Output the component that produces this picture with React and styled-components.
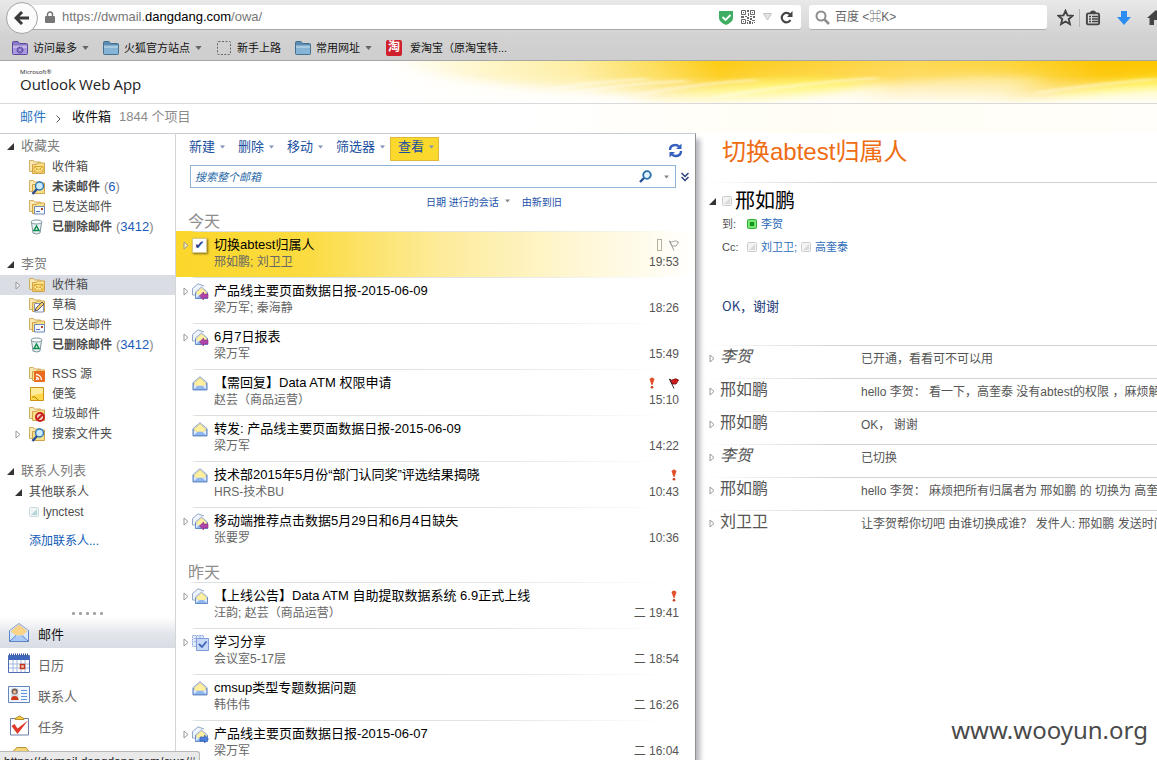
import { useState } from "react";
import styled, { createGlobalStyle } from "styled-components";

const GlobalStyle = createGlobalStyle`
  * {
    box-sizing: border-box;
  }
  body {
    margin: 0;
    background: #fff;
    font-family: "Liberation Sans", "Noto Sans CJK SC", sans-serif;
    font-size: 12px;
    line-height: 18px;
    color: #4c4c4c;
  }
  button, input {
    font-family: inherit;
    margin: 0;
    padding: 0;
    border: 0;
    background: none;
  }
  button {
    cursor: pointer;
  }
  a {
    text-decoration: none;
    color: inherit;
  }
  ul {
    list-style: none;
    margin: 0;
    padding: 0;
  }
  svg {
    display: block;
    flex: none;
  }
`;

const Page = styled.div`
  position: relative;
  display: flex;
  flex-direction: column;
  height: 100vh;
  overflow: hidden;
`;

/* ---------- browser ---------- */
const Chrome = styled.header`
  flex: none;
  background: linear-gradient(#e9e9e9, #d2d2d2 60%, #cecece);
  border-bottom: 1px solid #a6a6a6;
`;
const NavBar = styled.div`
  display: flex;
  align-items: center;
  height: 35px;
  padding-left: 6px;
  overflow: hidden;
`;
const BackBtn = styled.button`
  display: flex;
  align-items: center;
  justify-content: center;
  flex: none;
  width: 32px;
  height: 32px;
  border: 1px solid #a4a4a4;
  border-radius: 50%;
  background: #fbfbfb;
  z-index: 1;
`;
const UrlBox = styled.div`
  display: flex;
  align-items: center;
  flex: 1;
  height: 25px;
  margin-left: -8px;
  padding: 0 8px 0 15px;
  background: #fff;
  border-bottom: 1px solid #a9a9a9;
  border-radius: 0 3px 3px 0;
`;
const Url = styled.span`
  flex: 1;
  padding-left: 7px;
  font-size: 13px;
  color: #777;

  b {
    font-weight: normal;
    color: #000;
  }
`;
const UrlIcons = styled.div`
  display: flex;
  align-items: center;
  gap: 8px;
`;
const ChromeSearch = styled.label`
  display: flex;
  align-items: center;
  gap: 5px;
  flex: none;
  width: 238px;
  height: 25px;
  margin-left: 8px;
  padding-left: 6px;
  background: #fff;
  border-bottom: 1px solid #a9a9a9;
  border-radius: 3px;

  input {
    flex: 1;
    min-width: 0;
    font-size: 12px;
    outline: none;
  }
  input::placeholder {
    color: #666;
    opacity: 1;
  }
`;
const ChromeTools = styled.div`
  display: flex;
  align-items: center;
  gap: 16px;
  flex: none;
  width: 110px;
  padding-left: 10px;
  overflow: hidden;
`;
const ToolPair = styled.div`
  display: flex;
  align-items: center;
  gap: 5px;
`;
const ToolDivider = styled.span`
  width: 1px;
  height: 18px;
  background: #b5b5b5;
`;
const Bookmarks = styled.nav`
  display: flex;
  align-items: center;
  gap: 14px;
  height: 25px;
  padding-left: 12px;
`;
const Bookmark = styled.a`
  display: flex;
  align-items: center;
  gap: 5px;
  font-size: 11px;
  color: #111;
  white-space: nowrap;
`;
const TaoBadge = styled.span`
  width: 16px;
  height: 16px;
  margin-right: 3px;
  border-radius: 2px;
  background: #d0202c;
  color: #fff;
  font-size: 12px;
  font-weight: bold;
  line-height: 15px;
  text-align: center;
`;

/* ---------- banner ---------- */
const Banner = styled.div`
  display: flex;
  justify-content: space-between;
  flex: none;
  height: 43px;
  border-bottom: 1px solid #d9d9d9;
`;
const Logo = styled.div`
  padding: 8px 0 0 20px;
  color: #222;
  font-family: "Open Sans", "Noto Sans", sans-serif;
`;
const LogoSmall = styled.div`
  font-size: 6px;
  line-height: 7px;
`;
const LogoBig = styled.div`
  display: flex;
  gap: 3px;
  font-size: 15px;
  line-height: 17px;
`;
const Crumbs = styled.nav`
  display: flex;
  align-items: center;
  flex: none;
  height: 29px;
  padding: 0 0 4px 20px;
  font-size: 13px;
  color: #8b8b8b;
  background: linear-gradient(90deg, #fff 45%, #fffdf3 70%, #fffefa);

  a {
    color: #2a76c4;
  }
  svg {
    margin: 4px 11px 0 10px;
  }
  strong {
    margin-right: 8px;
    font-weight: normal;
    color: #111;
  }
`;

/* ---------- layout ---------- */
const Main = styled.main`
  display: flex;
  flex: 1;
  min-height: 0;
`;
const Sidebar = styled.aside`
  display: flex;
  flex-direction: column;
  flex: none;
  width: 175px;
  border-top: 1px solid #c9ced6;
`;
const Tree = styled.div`
  flex: 1;
  min-height: 0;
  padding-top: 1px;
  overflow: hidden;
`;
const TreeSection = styled.section`
  margin-bottom: 16px;
`;
const TreeHead = styled.h2`
  display: flex;
  align-items: center;
  gap: 7px;
  height: 22px;
  margin: 0;
  padding-left: 7px;
  font-size: 13px;
  font-weight: normal;
  color: #7c7c7c;
`;
const TreeRow = styled.a`
  display: flex;
  align-items: center;
  gap: 7px;
  height: 20px;
  margin-top: ${(p) => (p.$spaced ? "9px" : "0")};
  padding-left: 15px;
  font-size: 12px;
  font-weight: ${(p) => (p.$bold ? "bold" : "normal")};
  background: ${(p) => (p.$active ? "#dadde4" : "none")};
`;
const Slot = styled.span`
  width: 7px;
`;
const Count = styled.span`
  margin-left: -3px;
  font-size: 13px;
  font-weight: normal;
  color: #8a8a8a;

  b {
    font-weight: normal;
    color: #1e5bb8;
  }
`;
const ContactRow = styled.a`
  display: flex;
  align-items: center;
  gap: ${(p) => (p.$leaf ? "4px" : "7px")};
  height: 20px;
  padding-left: ${(p) => (p.$leaf ? "29px" : "15px")};
`;
const AddContact = styled.a`
  display: block;
  margin-top: 10px;
  padding-left: 29px;
  color: #0f5bb5;
`;
const Modules = styled.nav`
  flex: none;
  height: 152px;
  overflow: hidden;
`;
const Dots = styled.div`
  display: flex;
  justify-content: center;
  gap: 4px;
  height: 9px;
  padding-top: 4px;

  i {
    width: 3px;
    height: 3px;
    border-radius: 1px;
    background: #a4a4a4;
  }
`;
const ModuleLink = styled.a`
  display: flex;
  align-items: center;
  gap: 8px;
  height: 31px;
  padding-left: 8px;
  font-size: 13px;
  color: ${(p) => (p.$active ? "#111" : "#666")};
  background: ${(p) =>
    p.$active ? "linear-gradient(#fff, #e4e7ec 50%, #d8dce4)" : "none"};

  span {
    padding-top: 4px;
  }
`;

/* ---------- message list ---------- */
const ListPane = styled.section`
  flex: none;
  width: 521px;
  border: 1px solid #c9ced6;
  border-right-color: #8f8f8f;
  border-left-color: #d5d5d5;
  border-bottom: 0;
  background: #fff;
  box-shadow: 5px 5px 5px -1px #b5b5bd;
  z-index: 1;
`;
const Toolbar = styled.div`
  display: flex;
  align-items: center;
  height: 31px;
  padding: 1px 12px 2px 5px;
`;
const ToolBtn = styled.button`
  display: flex;
  align-items: center;
  gap: 5px;
  height: 24px;
  padding: 0 4px 4px 7px;
  border: 1px solid ${(p) => (p.$active ? "#e0b93c" : "transparent")};
  background: ${(p) => (p.$active ? "#fbd82c" : "none")};
  font-size: 13px;
  line-height: 16px;
  color: #1a4fa0;
`;
const RefreshBtn = styled.button`
  margin: 2px 0 0 auto;
`;
const SearchRow = styled.div`
  display: flex;
  align-items: center;
  gap: 5px;
  padding: 0 6px 0 14px;
`;
const SearchBox = styled.label`
  display: flex;
  align-items: center;
  gap: 12px;
  flex: 1;
  height: 23px;
  padding: 0 6px 0 4px;
  border: 1px solid #8fb4d8;

  input {
    flex: 1;
    min-width: 0;
    font-size: 11px;
    outline: none;
  }
  input::placeholder {
    color: #2b6aa8;
    font-style: italic;
    opacity: 1;
  }
`;
const SortRow = styled.div`
  display: flex;
  align-items: center;
  gap: 12px;
  height: 24px;
  padding: 2px 0 0 250px;

  button {
    display: flex;
    align-items: center;
    gap: 6px;
    font-size: 10px;
    color: #1b52a8;
  }
`;
const GroupHead = styled.h2`
  height: 19px;
  margin: ${(p) => (p.$first ? "0" : "10px 0 0")};
  padding-left: 12px;
  font-size: 16px;
  font-weight: normal;
  line-height: 20px;
  color: #8e8e8e;
`;
const MailRow = styled.li`
  display: flex;
  height: 46px;
  padding: 5px 16px 0 7px;
  border-top: 1px solid transparent;
  border-image: linear-gradient(
      90deg,
      transparent 3%,
      #dadfdf 4%,
      #e2e5e5 60%,
      transparent 95%
    )
    1;
  background: ${(p) =>
    p.$selected
      ? "linear-gradient(90deg, #fbd72b, #fbdb40 25%, #fdeb98 50%, #fff6cf 75%, #fff)"
      : "none"};
`;
const RowLeft = styled.div`
  display: flex;
  align-items: center;
  gap: 2px;
  width: 31px;
  height: 16px;
`;
const RowCheck = styled.input`
  appearance: none;
  display: grid;
  place-content: center;
  width: 15px;
  height: 15px;
  background: #fff;
  border: 1px solid #d8c88a;
  box-shadow: 1px 1px 2px #7d6c1c;

  &:checked::before {
    content: "✔";
    font: 12px/13px "DejaVu Sans", sans-serif;
    color: #2a3f95;
  }
`;
const RowText = styled.div`
  flex: 1;
  min-width: 0;
  overflow: hidden;
  white-space: nowrap;
`;
const Subject = styled.div`
  font-size: 13px;
  line-height: 16px;
  color: #000;
`;
const Sender = styled.div`
  font-size: 12px;
  line-height: 18px;
  color: #666;
`;
const RowRight = styled.div`
  display: flex;
  flex-direction: column;
  align-items: flex-end;
  font-size: 12px;
  color: #555;
`;
const Marks = styled.div`
  display: flex;
  align-items: center;
  gap: ${(p) => (p.$tight ? "4px" : "12px")};
  height: 16px;
`;

/* ---------- reading pane ---------- */
const Reading = styled.article`
  flex: 1;
  min-width: 0;
  overflow: hidden;
  padding-left: 11px;
`;
const Title = styled.h1`
  height: 49px;
  margin: 0;
  padding: 4px 0 0 15px;
  font-size: 24px;
  font-weight: normal;
  line-height: 30px;
  color: #ee6c12;
`;
const Rule = styled.div`
  height: 1px;
  background: linear-gradient(90deg, transparent, #d0d0d0 30%);
`;
const From = styled.div`
  display: flex;
  align-items: center;
  height: 29px;
  padding: 7px 0 0 2px;
  font-size: 20px;
  line-height: 24px;
  color: #000;

  svg + svg {
    margin: 0 3px 0 6px;
  }
`;
const Recipients = styled.div`
  display: flex;
  align-items: center;
  gap: 4px;
  height: 23px;
  padding-left: 15px;
  font-size: 11px;

  span {
    width: 21px;
  }
  a {
    color: #2d6cb8;
  }
`;
const Body = styled.p`
  height: 87px;
  margin: 0;
  padding: 39px 0 0 15px;
  font-family: "Noto Sans CJK SC", sans-serif;
  font-size: 13px;
  color: #24407e;
`;
const ReplyRow = styled.li`
  display: grid;
  grid-template-columns: 13px 141px 1fr;
  align-items: start;
  height: 33px;
  border-top: 1px solid transparent;
  border-image: linear-gradient(90deg, transparent, #d2d2d2 30%) 1;
  white-space: nowrap;
  overflow: hidden;

  svg {
    margin: 8px 0 0 2px;
  }
`;
const ReplyName = styled.span`
  font-size: 16px;
  line-height: 22px;
  font-style: ${(p) => (p.$me ? "italic" : "normal")};
  color: #555;
`;
const ReplyText = styled.span`
  padding-top: 4px;
  font-size: 12px;
  color: #555;
`;

const StatusBar = styled.div`
  position: absolute;
  left: 0;
  bottom: 0;
  z-index: 2;
  height: 9px;
  padding: 0 4px;
  overflow: hidden;
  border: 1px solid #b8b8b8;
  border-width: 1px 1px 0 0;
  border-radius: 0 3px 0 0;
  background: #e9e9e9;
  color: #222;
  font-size: 12px;
  line-height: 20px;
`;
const Watermark = styled.div`
  position: absolute;
  right: 9px;
  bottom: 15px;
  z-index: 2;
  font-family: "Noto Sans", sans-serif;
  font-size: 24px;
  line-height: 30px;
  color: #4a4a4a;
`;

/* ---------- small glyphs ---------- */
const Down = ({ color = "#7d94b8", w = 5 }) => (
  <svg width={w} height="4" viewBox="0 0 8 5">
    <path d="M0 0h8L4 5z" fill={color} />
  </svg>
);
const Open = () => (
  <svg width="7" height="7" viewBox="0 0 7 7">
    <path d="M7 0v7H0z" fill="#333" />
  </svg>
);
const Closed = () => (
  <svg width="6" height="9" viewBox="0 0 6 9">
    <path d="M1 1l4 3.5L1 8z" fill="#fff" fillOpacity=".6" stroke="#999" />
  </svg>
);
const Presence = ({ kind }) => (
  <svg width="10" height="10" viewBox="0 0 10 10">
    <rect
      x=".5"
      y=".5"
      width="9"
      height="9"
      rx="1"
      fill={kind === "on" ? "#7ee07a" : "#f4f4f4"}
      stroke={kind === "on" ? "#2fb52f" : kind === "lync" ? "#c5dce0" : "#cdcdcd"}
    />
    <path
      d={kind === "on" ? "M3 3h4v4H3z" : "M2 8L8 2v6z"}
      fill={kind === "on" ? "#0a9a14" : kind === "lync" ? "#b4d6da" : "#dadada"}
    />
  </svg>
);

const BlueFolder = ({ purple }) => (
  <svg width="16" height="16" viewBox="0 0 16 16">
    <path
      d="M.5 13.500V2.500q0-1 1-1H6l1.500 2H14.500q1 0 1 1v9q0 1-1 1H1.500q-1 0-1-1z"
      fill={purple ? "#8a78c8" : "#5a8cb4"}
      stroke={purple ? "#5d4a9c" : "#47708f"}
    />
    <path d="M1 5.500h14v8.500H1z" fill={purple ? "#a99adf" : "#86b4d6"} />
    <path d="M1 5.500h14v2.500H1z" fill="#fff" opacity=".3" />
    {purple && (
      <circle cx="8" cy="10" r="2.500" fill="none" stroke="#5b469f" strokeWidth="2" strokeDasharray="1.500 .5" />
    )}
  </svg>
);

const FolderIcon = ({ kind }) => {
  if (kind === "trash")
    return (
      <svg width="16" height="16" viewBox="0 0 16 16">
        <path d="M2.500 3.500L4 14q4 2 7 0l1.500-10.500z" fill="#e6f2f3" stroke="#7d959c" />
        <ellipse cx="7.500" cy="3" rx="5.500" ry="2" fill="#f8fcfc" stroke="#7d959c" />
        <path d="M7.500 7l2.500 4.500H5z" fill="none" stroke="#118a4e" strokeWidth="1.500" />
      </svg>
    );
  if (kind === "note")
    return (
      <svg width="16" height="16" viewBox="0 0 16 16">
        <path d="M1.500 1.500h13v13h-13z" fill="#ffd84a" stroke="#c99412" />
        <path d="M2 2h12v5L2 10z" fill="#ffec9a" />
        <path d="M3 11h3l3 3" fill="none" stroke="#b8860b" />
      </svg>
    );
  return (
    <svg width="16" height="16" viewBox="0 0 16 16">
      <path d="M.5 12.500V1.500h4l1 1.500h6v9.500z" fill="#f9e8b0" stroke="#cfae62" />
      <path d="M3.500 14.500v-9h4l1-1.500h7v10.500z" fill="#fbe08a" stroke="#cfa34c" />
      {kind === "inbox" && (
        <path d="M5 7.500h9v5.500H5zM5 7.500l4.500 3.500L14 7.500M5 13l3-3M14 13l-3-3" fill="#fff0a8" stroke="#dba52c" />
      )}
      {kind === "sent" && (
        <>
          <path d="M5.500 7.500h10v7.500h-10z" fill="#f3f7fe" stroke="#6d88bd" />
          <path d="M12 9h2v2h-2z" fill="#b5482a" />
          <path d="M7 12.500h4" stroke="#5673b5" />
        </>
      )}
      {kind === "draft" && (
        <>
          <path d="M5.500 6.500h9v8.500h-9z" fill="#f6f9ff" stroke="#8894b0" />
          <path d="M6 14l1-3 6-6 2 2-6 6z" fill="#f4c95a" stroke="#5a5a78" />
        </>
      )}
      {kind === "search" && (
        <>
          <circle cx="10.500" cy="7" r="4" fill="#cfeafa" stroke="#2a78b8" strokeWidth="1.500" />
          <path d="M8 10l-4.500 5" stroke="#2c4f9a" strokeWidth="2.500" />
        </>
      )}
      {kind === "rss" && (
        <>
          <rect x="5" y="5" width="11" height="11" rx="1" fill="#ea6a1f" />
          <path d="M7 8.500a5.500 5.500 0 0 1 5.500 5.500M7 11.500a2.500 2.500 0 0 1 2.500 2.500" fill="none" stroke="#fff" strokeWidth="1.300" />
          <circle cx="7.500" cy="13.500" r=".8" fill="#fff" />
        </>
      )}
      {kind === "junk" && (
        <>
          <circle cx="11" cy="11" r="4" fill="#f8d4ce" stroke="#c8201c" strokeWidth="2" />
          <path d="M8.500 13.500l5-5" stroke="#c8201c" strokeWidth="2" />
        </>
      )}
    </svg>
  );
};

const Envelope = () => (
  <>
    <path d="M1 6.500L7 1.500 13 6.500V13H1z" fill="#d5e6fb" stroke="#8ba3c8" strokeWidth=".8" />
    <path d="M2 7L7 2.500 12 7v2L7 10.500 2 9z" fill="#fff0a0" stroke="#dcc274" strokeWidth=".6" />
    <path d="M1 8l4 2h4l4-2v5H1z" fill="#dcebfd" />
    <path d="M1 13l4-3.500h4l4 3.500z" fill="#8fb6ee" />
    <path d="M1 7v6h12V7" fill="none" stroke="#5d84c4" strokeWidth=".9" />
  </>
);

const MailIcon = ({ kind }) => {
  if (kind === "single")
    return (
      <svg width="16" height="16" viewBox="0 0 14 14">
        <Envelope />
      </svg>
    );
  if (kind === "meeting")
    return (
      <svg width="17" height="17" viewBox="0 0 17 17">
        <path d="M.5 1.500h11v11H.5z" fill="#dfe9fa" stroke="#8aa5d8" strokeDasharray="1.500 .8" />
        <path d="M2 4.500h9M2 7.500h9M4.500 2v10M8 2v10" stroke="#9db5e2" />
        <path d="M4.500 4.500h12v12h-12z" fill="#c5d8f7" stroke="#7f9cd8" />
        <path d="M7 10l3 3L14.500 7.500" fill="none" stroke="#3f64b8" strokeWidth="1.800" />
      </svg>
    );
  return (
    <svg width="17" height="17" viewBox="0 0 17 17">
      <path d="M.5 12V5.500L6 .8 12 3" fill="#eef4fd" stroke="#93a6c8" />
      <path d="M.5 12h4" stroke="#93a6c8" />
      <g transform="translate(2.500 2.500)">
        <Envelope />
      </g>
      {kind === "replied" && (
        <path d="M7.500 13l4-4V11H16v4h-4.500v2z" fill="#b044a8" stroke="#8a2c84" strokeWidth=".6" />
      )}
      {kind === "forwarded" && (
        <path d="M16.500 13l-4-4V11H8v4h4.500v2z" fill="#4c80dc" stroke="#2b56ac" strokeWidth=".6" />
      )}
    </svg>
  );
};

const Important = () => (
  <svg width="10" height="12" viewBox="0 0 10 12">
    <path d="M2.500 2q2.500-3 5 0L5.500 8h-1z" fill="#e2502c" />
    <circle cx="5" cy="10.300" r="1.300" fill="#c83c1c" />
  </svg>
);
const Flag = ({ red }) => (
  <svg width="10" height="11" viewBox="0 0 10 11">
    <path
      d="M.5 1q2 2 4 .5T9.500 2L7 6H3z"
      fill={red ? "#d01c1c" : "none"}
      stroke={red ? "#7a1010" : "#999"}
      strokeWidth=".9"
    />
    <path d="M.5 1l4.500 9.500" stroke={red ? "#333" : "#999"} />
  </svg>
);
const Category = () => (
  <svg width="10" height="12" viewBox="0 0 10 12">
    <rect x="2.500" y=".5" width="4" height="11" fill="#fffdf0" stroke="#b5b2a2" />
  </svg>
);

const ModuleIcon = ({ kind }) => (
  <svg width="22" height="22" viewBox="0 0 22 22">
    {kind === "mail" && (
      <>
        <path d="M1.500 8.500L11 1.500l9.500 7v11h-19z" fill="#e8f1fc" stroke="#8a9fc4" />
        <path d="M3.500 9L11 3l7.500 6v3L11 15l-7.500-3z" fill="#fbd48a" stroke="#e3b562" strokeWidth=".6" />
        <path d="M2 9l6 4.500h6L20 9v10H2z" fill="#d8e8fc" />
        <path d="M2 19.500L8 13.500h6l6 6z" fill="#a9caf6" />
        <path d="M1.500 8.500v11h19v-11M2 19l6-5.500M20 19l-6-5.500" fill="none" stroke="#5d84c4" />
      </>
    )}
    {kind === "calendar" && (
      <>
        <path d="M.5 2.500h21v17H.5z" fill="#fff" stroke="#4e6eb2" />
        <path d="M1 3h20v4H1z" fill="#3f66bb" />
        <path d="M1 1.500h20" stroke="#2e4f9c" strokeWidth="2" strokeDasharray="1 1" />
        <path d="M1 11h20M1 15h20M5 7v12M9 7v12M13 7v12M17 7v12" stroke="#a4b8de" />
        <path d="M12.500 11.500h4v4h-4z" fill="#f6c9b8" stroke="#c03820" strokeWidth="1.500" />
      </>
    )}
    {kind === "contacts" && (
      <>
        <path d="M.5 2.500h21v16H.5z" fill="#f3f8ff" stroke="#6585bd" />
        <path d="M3 4.500h7.500v12H3z" fill="#d9dde4" />
        <circle cx="6.700" cy="7.500" r="3" fill="#6b5a52" />
        <circle cx="6.700" cy="8" r="1.800" fill="#e8b898" />
        <path d="M3 16q0-4 3.700-4t3.800 4z" fill="#cc3a1c" />
        <path d="M13 6.500h6M13 9.500h6M13 12.500h6M13 15.500h6" stroke="#5f92d8" />
      </>
    )}
    {kind === "tasks" && (
      <>
        <path d="M2.500 3.500h18v16.500h-18z" fill="#fff" stroke="#6d7fa8" />
        <path d="M7 4.500q0-2 2-2 2.500-3 5 0 2 0 2 2z" fill="#f5cf4a" stroke="#b8912a" />
        <path d="M3.500 11l3-2 3 4.500L20 5.500 9.500 19z" fill="#e2382a" />
      </>
    )}
    {kind === "public" && (
      <>
        <path d="M1 9L9 1.500h9l3 4V22H1z" fill="#f4d774" stroke="#b49436" />
        <path d="M4 7h14" stroke="#9d8330" strokeWidth="1.500" />
      </>
    )}
  </svg>
);

// yellow light sweep on the right of the banner
const Sweep = () => (
  <svg width="770" height="42" viewBox="0 0 770 42">
    <defs>
      <linearGradient id="sweepX">
        <stop offset="0" stopColor="#fff" />
        <stop offset=".1" stopColor="#fff8d2" />
        <stop offset=".25" stopColor="#feeea0" />
        <stop offset=".35" stopColor="#fddd58" />
        <stop offset=".43" stopColor="#fdcc14" />
        <stop offset=".5" stopColor="#fdd02c" />
        <stop offset=".68" stopColor="#fed956" />
        <stop offset=".8" stopColor="#fdd640" />
        <stop offset=".93" stopColor="#fdc600" />
        <stop offset="1" stopColor="#fdc800" />
      </linearGradient>
      <linearGradient id="sweepY" x2="0" y2="1">
        <stop offset="0" stopColor="#fff" stopOpacity="0" />
        <stop offset=".35" stopColor="#fff" stopOpacity=".08" />
        <stop offset=".7" stopColor="#fff" stopOpacity=".5" />
        <stop offset="1" stopColor="#fff" stopOpacity=".9" />
      </linearGradient>
      <filter id="wide" x="-20%" y="-80%" width="140%" height="260%">
        <feGaussianBlur stdDeviation="12 4" />
      </filter>
      <filter id="fine" x="-20%" y="-80%" width="140%" height="260%">
        <feGaussianBlur stdDeviation="5 1" />
      </filter>
    </defs>
    <rect width="770" height="42" fill="url(#sweepX)" />
    <g filter="url(#wide)">
      <path d="M-30 -10Q60 26 250 34L250 60H-30z" fill="#fff" opacity=".8" />
      <path d="M270 40Q330 20 420 18L500 22 420 42z" fill="#ffef30" />
      <path d="M650 40Q710 20 790 16v26z" fill="#ffef20" />
    </g>
    <rect width="770" height="42" fill="url(#sweepY)" />
    <g filter="url(#wide)">
      <path d="M380 46Q470 26 590 14L660 16 600 46z" fill="#fff" opacity=".35" />
      <path d="M340 50Q430 32 500 22L470 50z" fill="#fff" opacity=".6" />
      <path d="M620 50Q700 32 790 26v24z" fill="#fff" opacity=".6" />
    </g>
    <g filter="url(#fine)" fill="none" stroke="#fff" strokeWidth="2" opacity=".6">
      <path d="M165 28Q210 20 260 18" />
      <path d="M185 32Q240 22 300 20" />
      <path d="M250 34Q310 22 370 19" />
      <path d="M330 36Q410 22 490 17" />
      <path d="M650 32Q700 24 770 18" />
    </g>
  </svg>
);

const tree = [
  {
    title: "收藏夹",
    rows: [
      { icon: "inbox", name: "收件箱" },
      { icon: "search", name: "未读邮件", count: 6 },
      { icon: "sent", name: "已发送邮件" },
      { icon: "trash", name: "已删除邮件", count: 3412 },
    ],
  },
  {
    title: "李贺",
    rows: [
      { icon: "inbox", name: "收件箱", active: true, arrow: true },
      { icon: "draft", name: "草稿" },
      { icon: "sent", name: "已发送邮件" },
      { icon: "trash", name: "已删除邮件", count: 3412 },
      { icon: "rss", name: "RSS 源", spaced: true },
      { icon: "note", name: "便笺" },
      { icon: "junk", name: "垃圾邮件" },
      { icon: "search", name: "搜索文件夹", arrow: true },
    ],
  },
];

const modules = [
  { icon: "mail", name: "邮件" },
  { icon: "calendar", name: "日历" },
  { icon: "contacts", name: "联系人" },
  { icon: "tasks", name: "任务" },
  { icon: "public", name: "" },
];

const groups = [
  {
    title: "今天",
    mails: [
      { subject: "切换abtest归属人", from: "邢如鹏; 刘卫卫", time: "19:53", icon: "check", arrow: true },
      { subject: "产品线主要页面数据日报-2015-06-09", from: "梁万军; 秦海静", time: "18:26", icon: "replied", arrow: true },
      { subject: "6月7日报表", from: "梁万军", time: "15:49", icon: "replied", arrow: true },
      { subject: "【需回复】Data ATM 权限申请", from: "赵芸（商品运营）", time: "15:10", icon: "single", important: true, flag: true },
      { subject: "转发: 产品线主要页面数据日报-2015-06-09", from: "梁万军", time: "14:22", icon: "single" },
      { subject: "技术部2015年5月份“部门认同奖”评选结果揭晓", from: "HRS-技术BU", time: "10:43", icon: "single", important: true },
      { subject: "移动端推荐点击数据5月29日和6月4日缺失", from: "张要罗", time: "10:36", icon: "replied", arrow: true },
    ],
  },
  {
    title: "昨天",
    mails: [
      { subject: "【上线公告】Data ATM 自助提取数据系统 6.9正式上线", from: "汪韵; 赵芸（商品运营）", time: "二 19:41", icon: "multi", arrow: true, important: true },
      { subject: "学习分享", from: "会议室5-17层", time: "二 18:54", icon: "meeting", arrow: true },
      { subject: "cmsup类型专题数据问题", from: "韩伟伟", time: "二 16:26", icon: "single" },
      { subject: "产品线主要页面数据日报-2015-06-07", from: "梁万军", time: "二 16:04", icon: "forwarded", arrow: true },
    ],
  },
];

const replies = [
  { name: "李贺", me: true, text: "已开通，看看可不可以用" },
  { name: "邢如鹏", text: "hello 李贺： 看一下，高奎泰 没有abtest的权限 ，麻烦解决一下" },
  { name: "邢如鹏", text: "OK， 谢谢" },
  { name: "李贺", me: true, text: "已切换" },
  { name: "邢如鹏", text: "hello 李贺： 麻烦把所有归属者为 邢如鹏 的 切换为 高奎泰" },
  { name: "刘卫卫", text: "让李贺帮你切吧 由谁切换成谁？ 发件人: 邢如鹏 发送时间" },
];

const BrowserChrome = () => (
  <Chrome>
    <NavBar>
      <BackBtn aria-label="后退">
        <svg width="16" height="14" viewBox="0 0 16 14">
          <path d="M8 1L2 7l6 6M2.500 7H15" fill="none" stroke="#3a3a3a" strokeWidth="3" />
        </svg>
      </BackBtn>
      <UrlBox>
        <svg width="10" height="12" viewBox="0 0 10 12">
          <path d="M2.500 6V3.500a2.500 2.500 0 0 1 5 0V6" fill="none" stroke="#777" strokeWidth="1.500" />
          <rect y="5" width="10" height="7" rx="1" fill="#777" />
        </svg>
        <Url>
          https://dwmail.<b>dangdang.com</b>/owa/
        </Url>
        <UrlIcons>
          <svg width="14" height="15" viewBox="0 0 14 15">
            <path d="M0 1h14v7q0 4-7 7-7-3-7-7z" fill="#3fae62" />
            <path d="M3.500 7l3 3 5-5" fill="none" stroke="#fff" strokeWidth="1.800" />
          </svg>
          <svg width="14" height="14" viewBox="0 0 14 14">
            <g fill="none" stroke="#666">
              <path d="M.5.5h4v4h-4zM9.500.5h4v4h-4zM.5 9.500h4v4h-4z" />
            </g>
            <path
              d="M2 2h1v1H2zM11 2h1v1h-1zM2 11h1v1H2zM6 0h2v2H6zM7 3h1v3H7zM0 6h3v2H0zM4 6h2v1H4zM6 7h2v2H6zM9 6h2v1H9zM12 6h2v2h-2zM9 8h2v2H9zM6 10h2v1H6zM11 10h3v1h-3zM8 11h2v3H8zM11 12h1v2h-1zM13 12h1v1h-1zM6 12h1v2H6z"
              fill="#666"
            />
          </svg>
          <svg width="9" height="8" viewBox="0 0 9 8">
            <path d="M.5.5h8L4.500 7z" fill="#e4e4e4" stroke="#c4c4c4" />
          </svg>
          <svg width="13" height="13" viewBox="0 0 13 13">
            <path d="M10.500 9A4.700 4.700 0 1 1 10 3.500" fill="none" stroke="#444" strokeWidth="2.200" />
            <path d="M12.500 0v6H7z" fill="#444" />
          </svg>
        </UrlIcons>
      </UrlBox>
      <ChromeSearch>
        <svg width="15" height="15" viewBox="0 0 15 15">
          <circle cx="6" cy="6" r="4.500" fill="none" stroke="#8d8d8d" strokeWidth="2" />
          <path d="M9.500 9.500l4.500 4.500" stroke="#8d8d8d" strokeWidth="2.500" />
        </svg>
        <input aria-label="搜索" placeholder="百度 <⌘K>" />
      </ChromeSearch>
      <ChromeTools>
        <ToolPair>
          <svg width="17" height="17" viewBox="0 0 17 17">
            <path d="M8.500 1.800l2 4.600 5 .5-3.800 3.300 1.200 4.900-4.400-2.600-4.400 2.600 1.200-4.900L1.500 6.900l5-.5z" fill="none" stroke="#444" strokeWidth="1.900" />
          </svg>
          <ToolDivider />
          <svg width="16" height="16" viewBox="0 0 16 16">
            <path d="M5 3q0-2.500 3-2.500T11 3" fill="#444" />
            <rect x="1.900" y="3.400" width="12.200" height="11" rx="1.500" fill="none" stroke="#444" strokeWidth="1.900" />
            <path d="M4 6.500h2M7 6.500h6M4 9h2M7 9h6M4 11.500h2M7 11.500h6" stroke="#444" strokeWidth="1.300" />
          </svg>
        </ToolPair>
        <svg width="14" height="14" viewBox="0 0 14 14">
          <path d="M4 0h6v6h4l-7 8-7-8h4z" fill="#2d8cf0" />
        </svg>
        <svg width="18" height="15" viewBox="0 0 18 15">
          <path d="M9 0l9 8h-2.500v7H11v-5H7v5H2.500V8H0z" fill="#444" />
        </svg>
      </ChromeTools>
    </NavBar>
    <Bookmarks>
      <Bookmark href="#">
        <BlueFolder purple />
        访问最多
        <Down color="#666" w={7} />
      </Bookmark>
      <Bookmark href="#">
        <BlueFolder />
        火狐官方站点
        <Down color="#666" w={7} />
      </Bookmark>
      <Bookmark href="#">
        <svg width="16" height="16" viewBox="0 0 16 16">
          <rect x="1.500" y="1.500" width="13" height="13" rx="1" fill="none" stroke="#666" strokeDasharray="2 1.500" />
        </svg>
        新手上路
      </Bookmark>
      <Bookmark href="#">
        <BlueFolder />
        常用网址
        <Down color="#666" w={7} />
      </Bookmark>
      <Bookmark href="#">
        <TaoBadge>淘</TaoBadge>
        爱淘宝（原淘宝特...
      </Bookmark>
    </Bookmarks>
  </Chrome>
);

const Folders = () => (
  <Sidebar>
    <Tree>
      {tree.map((section) => (
        <TreeSection key={section.title}>
          <TreeHead>
            <Open />
            {section.title}
          </TreeHead>
          {section.rows.map((row) => (
            <TreeRow
              href="#"
              key={row.name}
              $bold={!!row.count}
              $active={row.active}
              $spaced={row.spaced}
            >
              <Slot>{row.arrow && <Closed />}</Slot>
              <FolderIcon kind={row.icon} />
              {row.name}
              {row.count && (
                <Count>
                  (<b>{row.count}</b>)
                </Count>
              )}
            </TreeRow>
          ))}
        </TreeSection>
      ))}
      <TreeHead>
        <Open />
        联系人列表
      </TreeHead>
      <ContactRow href="#">
        <Open />
        其他联系人
      </ContactRow>
      <ContactRow href="#" $leaf>
        <Presence kind="lync" />
        lynctest
      </ContactRow>
      <AddContact href="#">添加联系人...</AddContact>
    </Tree>
    <Modules>
      <Dots>
        <i />
        <i />
        <i />
        <i />
        <i />
      </Dots>
      {modules.map((m, i) => (
        <ModuleLink href="#" key={m.icon} $active={i === 0}>
          <ModuleIcon kind={m.icon} />
          <span>{m.name}</span>
        </ModuleLink>
      ))}
    </Modules>
  </Sidebar>
);

const Mail = ({ mail }) => {
  const [checked, setChecked] = useState(true);
  const isCheck = mail.icon === "check";
  return (
    <MailRow $selected={isCheck}>
      <RowLeft>
        <Slot>{mail.arrow && <Closed />}</Slot>
        {isCheck ? (
          <RowCheck
            type="checkbox"
            aria-label={mail.subject}
            checked={checked}
            onChange={() => setChecked(!checked)}
          />
        ) : (
          <MailIcon kind={mail.icon} />
        )}
      </RowLeft>
      <RowText>
        <Subject>{mail.subject}</Subject>
        <Sender>{mail.from}</Sender>
      </RowText>
      <RowRight>
        <Marks $tight={isCheck}>
          {mail.important && <Important />}
          {isCheck && <Category />}
          {(isCheck || mail.flag) && <Flag red={mail.flag} />}
        </Marks>
        {mail.time}
      </RowRight>
    </MailRow>
  );
};

const MessageList = () => (
  <ListPane>
    <Toolbar>
      {["新建", "删除", "移动", "筛选器", "查看"].map((name) => (
        <ToolBtn key={name} $active={name === "查看"}>
          {name}
          <Down />
        </ToolBtn>
      ))}
      <RefreshBtn aria-label="刷新">
        <svg width="15" height="15" viewBox="0 0 15 15">
          <path d="M2 7q0-5 5.500-5 2 0 3.500 1.500M13 8q0 5-5.500 5Q5.500 13 4 11.500" fill="none" stroke="#3560bd" strokeWidth="2.400" />
          <path d="M13.500.5V6H8zM1.500 14.500V9H7z" fill="#3560bd" />
        </svg>
      </RefreshBtn>
    </Toolbar>
    <SearchRow>
      <SearchBox>
        <input aria-label="搜索整个邮箱" placeholder="搜索整个邮箱" />
        <svg width="13" height="13" viewBox="0 0 13 13">
          <circle cx="8" cy="5" r="3.800" fill="#e2f1fb" stroke="#2470ae" strokeWidth="1.800" />
          <path d="M5 8l-4 4" stroke="#24509a" strokeWidth="2.400" />
        </svg>
        <Down color="#888" />
      </SearchBox>
      <svg width="8" height="10" viewBox="0 0 8 10">
        <path d="M.5 1L4 4.500 7.500 1M.5 5L4 8.500 7.500 5" fill="none" stroke="#2c3f7c" strokeWidth="1.500" />
      </svg>
    </SearchRow>
    <SortRow>
      <button>
        日期 进行的会话
        <Down color="#8a8a8a" />
      </button>
      <button>由新到旧</button>
    </SortRow>
    {groups.map((group, i) => (
      <div key={group.title}>
        <GroupHead $first={i === 0}>{group.title}</GroupHead>
        <ul>
          {group.mails.map((mail) => (
            <Mail key={mail.subject} mail={mail} />
          ))}
        </ul>
      </div>
    ))}
  </ListPane>
);

const ReadingPane = () => (
  <Reading>
    <Title>切换abtest归属人</Title>
    <Rule />
    <From>
      <Open />
      <Presence />
      邢如鹏
    </From>
    <Recipients>
      <span>到:</span>
      <Presence kind="on" />
      <a href="#">李贺</a>
    </Recipients>
    <Recipients>
      <span>Cc:</span>
      <Presence />
      <a href="#">刘卫卫;</a>
      <Presence />
      <a href="#">高奎泰</a>
    </Recipients>
    <Body>OK，谢谢</Body>
    <ul>
      {replies.map((reply, i) => (
        <ReplyRow key={i}>
          <Closed />
          <ReplyName $me={reply.me}>{reply.name}</ReplyName>
          <ReplyText>{reply.text}</ReplyText>
        </ReplyRow>
      ))}
    </ul>
  </Reading>
);

const App = () => {
  return (
    <>
      <GlobalStyle />
      <Page>
        <BrowserChrome />
        <Banner>
          <Logo>
            <LogoSmall>Microsoft®</LogoSmall>
            <LogoBig>
              <span>Outlook</span>
              <span>Web</span>
              <span>App</span>
            </LogoBig>
          </Logo>
          <Sweep />
        </Banner>
        <Crumbs>
          <a href="#">邮件</a>
          <svg width="5" height="8" viewBox="0 0 5 8">
            <path d="M.5.5L4 4 .5 7.500" fill="none" stroke="#555" />
          </svg>
          <strong>收件箱</strong>
          1844 个项目
        </Crumbs>
        <Main>
          <Folders />
          <MessageList />
          <ReadingPane />
        </Main>
        <StatusBar>https://dwmail.dangdang.com/owa/#</StatusBar>
        <Watermark>www.wooyun.org</Watermark>
      </Page>
    </>
  );
};
export default App;
